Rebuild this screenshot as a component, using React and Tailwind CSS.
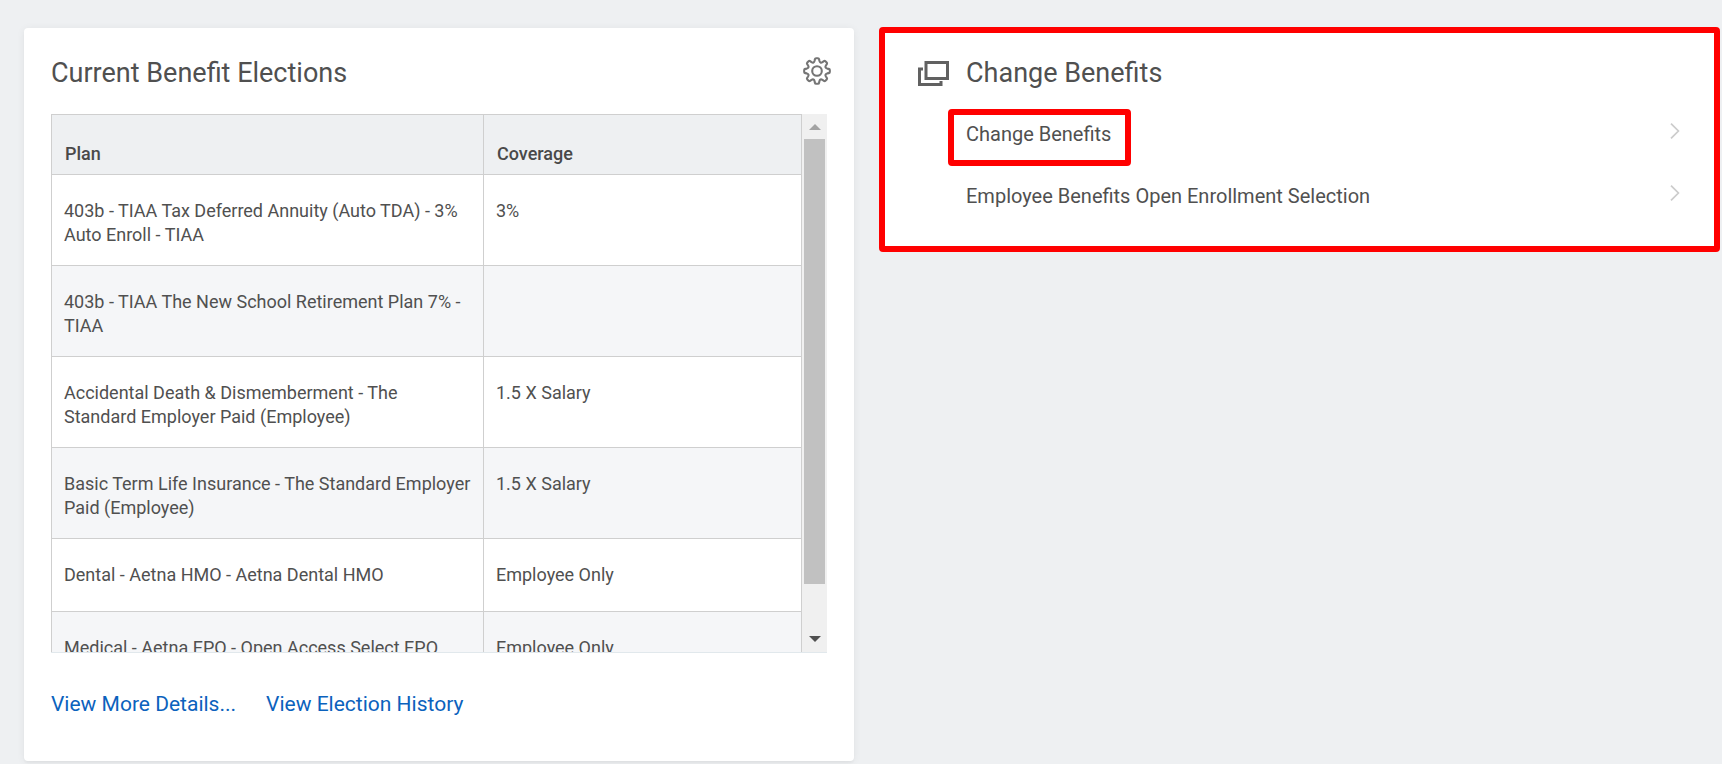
const elections = [
  { plan: '403b - TIAA Tax Deferred Annuity (Auto TDA) - 3% Auto Enroll - TIAA', coverage: '3%' },
  { plan: '403b - TIAA The New School Retirement Plan 7% - TIAA', coverage: '' },
  { plan: 'Accidental Death & Dismemberment - The Standard Employer Paid (Employee)', coverage: '1.5 X Salary' },
  { plan: 'Basic Term Life Insurance - The Standard Employer Paid (Employee)', coverage: '1.5 X Salary' },
  { plan: 'Dental - Aetna HMO - Aetna Dental HMO', coverage: 'Employee Only' },
  { plan: 'Medical - Aetna EPO - Open Access Select EPO', coverage: 'Employee Only' },
];

// Eight rounded teeth around the centre of a 28-unit box.
function gearPath() {
  const at = (u, v, turn) => {
    const a = (turn * Math.PI) / 4;
    const x = 14 + u * Math.cos(a) + v * Math.sin(a);
    const y = 14 + u * Math.sin(a) - v * Math.cos(a);
    return `${x.toFixed(2)} ${y.toFixed(2)}`;
  };
  let d = `M${at(-2.4, 10.2, 0)}`;
  for (let i = 0; i < 8; i++) {
    d += ` L${at(-2.1, 11.8, i)} Q${at(-1.9, 12.8, i)} ${at(-0.9, 12.8, i)}`;
    d += ` L${at(0.9, 12.8, i)} Q${at(1.9, 12.8, i)} ${at(2.1, 11.8, i)} L${at(2.4, 10.2, i)}`;
    d += ` Q${at(3.1, 7.5, i)} ${at(-2.4, 10.2, i + 1)}`;
  }
  return d + 'Z';
}

function GearIcon() {
  return (
    <svg viewBox="0 0 28 28" className="size-7" fill="none" stroke="#757575" strokeWidth="2.1" strokeLinejoin="round" aria-hidden="true">
      <path d={gearPath()} />
      <circle cx="14" cy="14" r="4.8" />
    </svg>
  );
}

function WindowsIcon() {
  return (
    <svg viewBox="0 0 31 25" className="h-[25px] w-[31px] shrink-0" fill="none" stroke="#616161" strokeWidth="3" aria-hidden="true">
      <path d="M8 1.5h21.5v16H8z" />
      <path d="M5 8H1.5v15.5H23V20" />
    </svg>
  );
}

function ScrollBar() {
  return (
    <div className="flex w-[25px] shrink-0 flex-col bg-[#f0f0f0]">
      <button type="button" aria-label="Scroll up" className="flex h-[25px] shrink-0 items-center justify-center">
        <svg viewBox="0 0 12 6" className="h-[6px] w-3" fill="#a3a3a3" aria-hidden="true"><path d="M0 6 6 0l6 6z" /></svg>
      </button>
      <div className="flex-1 px-[2px]">
        <div className="h-[91.4%] bg-[#c1c1c1]" />
      </div>
      <button type="button" aria-label="Scroll down" className="flex h-[26px] shrink-0 items-center justify-center">
        <svg viewBox="0 0 12 6" className="h-[6px] w-3" fill="#505050" aria-hidden="true"><path d="M0 0h12L6 6z" /></svg>
      </button>
    </div>
  );
}

function ElectionsCard() {
  return (
    <section className="mt-px rounded bg-white px-[27px] pt-[29px] pb-10 shadow-[0_1px_8px_rgba(0,0,0,0.06),0_2px_2px_rgba(0,0,0,0.03)]">
      <header className="flex h-8 items-start justify-between">
        <h2 className="text-[27px] leading-8">Current Benefit Elections</h2>
        <button type="button" aria-label="Settings" className="-mr-1">
          <GearIcon />
        </button>
      </header>
      <div className="mt-[25px] flex h-[539px] border-b border-[#e1e8ec]">
        <div className="min-w-0 flex-1 overflow-hidden">
          <table className="w-full table-fixed border-separate border-spacing-0 border-t border-l border-[#cfcfcf] text-left text-[18px] leading-6">
            <colgroup>
              <col className="w-[57.6%]" />
              <col />
            </colgroup>
            <thead>
              <tr className="h-[60px] bg-[#eef0f2] text-[#494949]">
                <th scope="col" className="border-r border-b border-[#cfcfcf] px-[13px] pb-2 align-bottom font-medium">Plan</th>
                <th scope="col" className="border-r border-b border-[#cfcfcf] px-[13px] pb-2 align-bottom font-medium">Coverage</th>
              </tr>
            </thead>
            <tbody>
              {elections.map((row) => (
                <tr key={row.plan} className="h-[73px] odd:bg-white even:bg-[#f5f6f8]">
                  <td className="border-r border-b border-[#cfcfcf] px-3 pt-6 pb-[18px] align-top">{row.plan}</td>
                  <td className="border-r border-b border-[#cfcfcf] px-3 pt-6 pb-[18px] align-top">{row.coverage}</td>
                </tr>
              ))}
            </tbody>
          </table>
        </div>
        <ScrollBar />
      </div>
      <nav className="mt-[35px] mb-px flex gap-[30px] text-[21px] leading-8 text-[#0b62bd]">
        <a href="#details">View More Details...</a>
        <a href="#history">View Election History</a>
      </nav>
    </section>
  );
}

function ChevronIcon() {
  return (
    <svg viewBox="0 0 10 16" className="h-4 w-[10px] shrink-0" fill="none" stroke="#cccccc" strokeWidth="1.7" aria-hidden="true">
      <path d="M1 .6 8.4 8 1 15.4" />
    </svg>
  );
}

function ChangeBenefitsCard() {
  return (
    <section className="rounded border-[6px] border-[#ff0000] bg-white pt-6 pb-[26px] pl-[33px]">
      <header className="flex h-8 items-center gap-[17px]">
        <WindowsIcon />
        <h2 className="text-[27px] leading-8">Change Benefits</h2>
      </header>
      <ul className="mt-5 pr-[34px] pl-[30px] text-[20px] leading-6">
        <li>
          <a href="#change" className="flex items-start justify-between">
            <span className="rounded border-[6px] border-[#ff0000] pt-[7px] pr-[14px] pb-[14px] pl-3">Change Benefits</span>
            <span className="pt-[14px]"><ChevronIcon /></span>
          </a>
        </li>
        <li>
          <a href="#enroll" className="flex items-start justify-between pt-[18px] pb-3 pl-[18px]">
            <span>Employee Benefits Open Enrollment Selection</span>
            <span className="pt-px"><ChevronIcon /></span>
          </a>
        </li>
      </ul>
    </section>
  );
}

export default function App() {
  return (
    <main className="grid min-h-screen grid-cols-[830fr_841fr] items-start gap-[25px] bg-[#eef0f2] pt-[27px] pr-[2px] pb-[3px] pl-6 font-['Roboto',sans-serif] text-[#505050]">
      <ElectionsCard />
      <ChangeBenefitsCard />
    </main>
  );
}
